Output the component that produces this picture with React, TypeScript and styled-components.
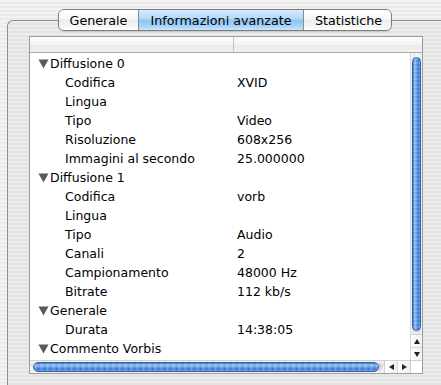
import React from "react";
import styled, { createGlobalStyle } from "styled-components";

const Global = createGlobalStyle`
  html, body { margin: 0; padding: 0; }
  body {
    width: 441px; height: 385px; overflow: hidden;
    font-family: "DejaVu Sans", "Liberation Sans", sans-serif;
    background: repeating-linear-gradient(to bottom, #f2f2f2 0px, #f2f2f2 2px, #eaeaea 2px, #eaeaea 4px);
  }
`;

const Page = styled.div`
  width: 441px;
  height: 385px;
  padding-top: 9px;
  box-sizing: border-box;
  display: flex;
  flex-direction: column;
  overflow: hidden;
`;

const TabGroup = styled.div`
  position: relative;
  z-index: 2;
  margin-left: 58px;
  width: 334px;
  height: 22px;
  box-sizing: border-box;
  display: flex;
  border: 1px solid #7d7d7d;
  border-radius: 6px;
  overflow: hidden;
  box-shadow: 0 1px 1px rgba(0, 0, 0, 0.12);
`;

const Tab = styled.div<{ $w: number; $active?: boolean }>`
  width: ${(p) => p.$w}px;
  flex: none;
  display: flex;
  align-items: center;
  justify-content: center;
  font-size: 12.7px;
  color: #000;
  & + & { border-left: 1px solid #8a8a8a; }
  background: ${(p) =>
    p.$active
      ? "linear-gradient(to bottom, #d6ebfd 0%, #b3d8f9 45%, #8ec4f3 52%, #a6d2f7 80%, #c8e6fd 100%)"
      : "linear-gradient(to bottom, #ffffff 0%, #f7f7f7 45%, #ececec 52%, #f6f6f6 85%, #ffffff 100%)"};
`;

const Panel = styled.div`
  margin-top: -11px;
  margin-left: 7px;
  width: 460px;
  flex: 1;
  box-sizing: border-box;
  border-left: 1px solid #8e8e8e;
  border-top: 1px solid #8e8e8e;
  border-top-left-radius: 6px;
  padding: 15px 0 0 21px;
  background: repeating-linear-gradient(to bottom, #ebebeb 0px, #ebebeb 2px, #e3e3e3 2px, #e3e3e3 4px);
`;

const Table = styled.div`
  width: 394px;
  box-sizing: border-box;
  border: 1px solid #9c9c9c;
  background: #fff;
  display: flex;
  flex-direction: column;
`;

const Header = styled.div`
  height: 15px;
  border-bottom: 1px solid #a9a9a9;
  display: flex;
  background: linear-gradient(to bottom, #fdfdfd 0%, #f3f3f3 50%, #e9e9e9 51%, #f1f1f1 100%);
`;

const HeaderCell = styled.div<{ $w?: number }>`
  ${(p) => (p.$w ? `width: ${p.$w}px; flex: none;` : "flex: 1;")}
  & + & { border-left: 1px solid #c4c4c4; }
`;

const Middle = styled.div`
  height: 307px;
  display: flex;
`;

const Rows = styled.div`
  flex: 1;
  overflow: hidden;
`;

const Row = styled.div`
  height: 19px;
  box-sizing: border-box;
  padding-top: 2px;
  display: grid;
  grid-template-columns: 204px 1fr;
  align-items: center;
  font-size: 12.5px;
  color: #000;
  white-space: nowrap;
`;

const Label = styled.div<{ $group?: boolean }>`
  display: flex;
  align-items: center;
  padding-left: ${(p) => (p.$group ? 8 : 35)}px;
`;

const Value = styled.div`
  padding-left: 3px;
`;

const Tri = styled.svg`
  width: 11px;
  height: 10px;
  flex: none;
  margin-right: 1px;
`;

const VScroll = styled.div`
  width: 12px;
  flex: none;
  display: flex;
  flex-direction: column;
  background: repeating-linear-gradient(to right, #f4f4f4 0px, #e7e7e7 3px, #fafafa 6px, #ececec 9px, #f2f2f2 12px);
  border-left: 1px solid #d8d8d8;
  box-sizing: border-box;
`;

const VTrack = styled.div`
  flex: 1;
  padding: 4px 1px 3px 1px;
  display: flex;
`;

const VThumb = styled.div`
  flex: 1;
  border-radius: 5px;
  border: 1px solid #2f5fb0;
  background:
    repeating-linear-gradient(to bottom, rgba(255,255,255,0.08) 0px, rgba(255,255,255,0.08) 2px, rgba(0,0,0,0.05) 2px, rgba(0,0,0,0.05) 4px),
    linear-gradient(to right, #3d6fc9 0%, #9cc8f5 25%, #6fa8ea 50%, #3c7bd9 75%, #73a7e8 100%);
  box-shadow: 0 3px 2px -1px #d8d8d8;
`;

const ArrowCell = styled.div<{ $vertical?: boolean; $first?: boolean }>`
  flex: none;
  display: flex;
  align-items: center;
  justify-content: center;
  background: linear-gradient(to right, #ffffff, #f0f0f0);
  ${(p) =>
    p.$vertical
      ? `height: 12px; border-top: 1px solid ${p.$first ? "#cfcfcf" : "#d6d6d6"};`
      : `width: 12px; border-left: 1px solid ${p.$first ? "#cfcfcf" : "#d6d6d6"};`}
`;

const Bottom = styled.div`
  height: 12px;
  display: flex;
  border-top: 1px solid #d2d2d2;
`;

const HScroll = styled.div`
  flex: 1;
  display: flex;
  background: repeating-linear-gradient(to bottom, #f6f6f6 0px, #e6e6e6 4px, #f8f8f8 8px, #efefef 11px);
`;

const HTrack = styled.div`
  flex: 1;
  padding: 1px 5px 1px 3px;
  display: flex;
`;

const HThumb = styled.div`
  flex: 1;
  border-radius: 5px;
  border: 1px solid #2f5fb0;
  background:
    repeating-linear-gradient(to right, rgba(255,255,255,0.1) 0px, rgba(255,255,255,0.1) 3px, rgba(0,0,0,0.05) 3px, rgba(0,0,0,0.05) 6px),
    linear-gradient(to bottom, #3d6fc9 0%, #9cc8f5 25%, #6fa8ea 50%, #3c7bd9 75%, #73a7e8 100%);
  box-shadow: 4px 0 2px -1px #d0d0d0;
`;

const Corner = styled.div`
  width: 12px;
  flex: none;
  background: #fff;
  border-left: 1px solid #cfcfcf;
  box-sizing: border-box;
`;

const Arrow = ({ dir }: { dir: "up" | "down" | "left" | "right" }) => {
  const pts =
    dir === "up" ? "0,5 3,0 6,5" : dir === "down" ? "0,0 6,0 3,5" : dir === "left" ? "5,0 5,6 0,3" : "0,0 0,6 5,3";
  const w = dir === "up" || dir === "down" ? 6 : 5;
  const h = dir === "up" || dir === "down" ? 5 : 6;
  return (
    <svg width={w} height={h} viewBox={`0 0 ${w} ${h}`}>
      <polygon points={pts} fill="#222" />
    </svg>
  );
};

type R = { label: string; value?: string; group?: boolean };

const rows: R[] = [
  { label: "Diffusione 0", group: true },
  { label: "Codifica", value: "XVID" },
  { label: "Lingua" },
  { label: "Tipo", value: "Video" },
  { label: "Risoluzione", value: "608x256" },
  { label: "Immagini al secondo", value: "25.000000" },
  { label: "Diffusione 1", group: true },
  { label: "Codifica", value: "vorb" },
  { label: "Lingua" },
  { label: "Tipo", value: "Audio" },
  { label: "Canali", value: "2" },
  { label: "Campionamento", value: "48000 Hz" },
  { label: "Bitrate", value: "112 kb/s" },
  { label: "Generale", group: true },
  { label: "Durata", value: "14:38:05" },
  { label: "Commento Vorbis", group: true },
];

export default function App() {
  return (
    <>
      <Global />
      <Page>
        <TabGroup>
          <Tab $w={79}>Generale</Tab>
          <Tab $w={164} $active>Informazioni avanzate</Tab>
          <Tab $w={89}>Statistiche</Tab>
        </TabGroup>
        <Panel>
          <Table>
            <Header>
              <HeaderCell $w={203} />
              <HeaderCell />
            </Header>
            <Middle>
              <Rows>
                {rows.map((r, i) => (
                  <Row key={i}>
                    <Label $group={r.group}>
                      {r.group && (
                        <Tri viewBox="0 0 11 10">
                          <polygon points="0.5,0.5 10.5,0.5 5.5,9.5" fill="#5a5a5a" />
                        </Tri>
                      )}
                      {r.label}
                    </Label>
                    <Value>{r.value ?? ""}</Value>
                  </Row>
                ))}
              </Rows>
              <VScroll>
                <VTrack>
                  <VThumb />
                </VTrack>
                <ArrowCell $vertical $first>
                  <Arrow dir="up" />
                </ArrowCell>
                <ArrowCell $vertical>
                  <Arrow dir="down" />
                </ArrowCell>
              </VScroll>
            </Middle>
            <Bottom>
              <HScroll>
                <HTrack>
                  <HThumb />
                </HTrack>
                <ArrowCell $first>
                  <Arrow dir="left" />
                </ArrowCell>
                <ArrowCell>
                  <Arrow dir="right" />
                </ArrowCell>
              </HScroll>
              <Corner />
            </Bottom>
          </Table>
        </Panel>
      </Page>
    </>
  );
}
